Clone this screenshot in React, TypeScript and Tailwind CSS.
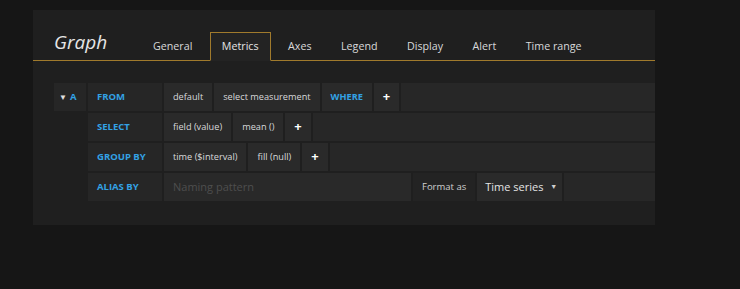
const tabs = ["General", "Metrics", "Axes", "Legend", "Display", "Alert", "Time range"];

function Segment({
  children,
  color = "text-[#d8d9da]",
  className = "",
}: {
  children: React.ReactNode;
  color?: string;
  className?: string;
}) {
  return (
    <div className={`flex items-center px-[9px] bg-[#2a2a2a] text-[9.2px] whitespace-nowrap ${color} ${className}`}>
      {children}
    </div>
  );
}

function Label({ children }: { children: React.ReactNode }) {
  return (
    <div className="flex items-center w-[74px] pl-[9px] bg-[#262626] text-[#33a2e5] text-[9.5px] font-bold">
      {children}
    </div>
  );
}

function Plus() {
  return (
    <div className="flex items-center px-[9px] bg-[#2a2a2a] font-bold text-[13px] text-white">+</div>
  );
}

function Filler() {
  return <div className="flex-1 bg-[#272727]" />;
}

export default function App() {
  return (
    <div
      className="min-h-screen bg-[#161616] pt-[10px] pl-[33px]"
      style={{ fontFamily: '"Open Sans", "Liberation Sans", sans-serif' }}
    >
      <div className="w-[622px] h-[215px] bg-[#1f1f1f]">
        <div className="flex items-end h-[51px] border-b border-[#a07a2c]">
          <div className="w-[108px] pl-[21px] pb-[8px] text-[19px] italic text-[#e6e6e6] leading-none">Graph</div>
          <div className="flex gap-[5.5px]">
            {tabs.map((t) =>
              t === "Metrics" ? (
                <div
                  key={t}
                  className="h-[29px] -mb-px px-[11px] flex items-center border border-[#a07a2c] border-b-[#232323] bg-[#232323] text-[10.7px] text-[#e4e4e4]"
                >
                  {t}
                </div>
              ) : (
                <div
                  key={t}
                  className="h-[29px] -mb-px px-[11px] flex items-center border border-transparent text-[10.7px] text-[#d8d9da]"
                >
                  {t}
                </div>
              )
            )}
          </div>
        </div>

        <div className="pt-[22px] pl-[21px] flex flex-col gap-[2px]">
          <div className="flex h-[28px] gap-[2px]">
            <div className="w-[32px] flex items-center pl-[5px] gap-[3px] bg-[#262626] text-[9.5px] font-bold">
              <span className="text-[#e0e0e0] text-[8px]">▼</span>
              <span className="text-[#33a2e5]">A</span>
            </div>
            <Label>FROM</Label>
            <Segment>default</Segment>
            <Segment>select measurement</Segment>
            <Segment color="text-[#33a2e5]" className="font-bold">WHERE</Segment>
            <Plus />
            <Filler />
          </div>

          <div className="flex h-[28px] gap-[2px]">
            <div className="w-[32px]" />
            <Label>SELECT</Label>
            <Segment>field (value)</Segment>
            <Segment>mean ()</Segment>
            <Plus />
            <Filler />
          </div>

          <div className="flex h-[28px] gap-[2px]">
            <div className="w-[32px]" />
            <Label>GROUP BY</Label>
            <Segment>time ($interval)</Segment>
            <Segment>fill (null)</Segment>
            <Plus />
            <Filler />
          </div>

          <div className="flex h-[28px] gap-[2px]">
            <div className="w-[32px]" />
            <Label>ALIAS BY</Label>
            <input
              placeholder="Naming pattern"
              className="w-[247px] px-[9px] bg-[#292929] text-[11px] text-[#d8d9da] placeholder:text-[#4e4e4e] outline-none"
            />
            <div className="flex items-center px-[9px] bg-[#232323] text-[#d0d0d0] text-[9.5px]">Format as</div>
            <div className="flex items-center w-[85px] pl-[8px] bg-[#2a2a2a] text-[#e4e4e4] text-[11px]">
              Time series
              <span className="ml-auto mr-[5px] text-[7px] text-[#cfcfcf]">▼</span>
            </div>
            <Filler />
          </div>
        </div>
      </div>
    </div>
  );
}
